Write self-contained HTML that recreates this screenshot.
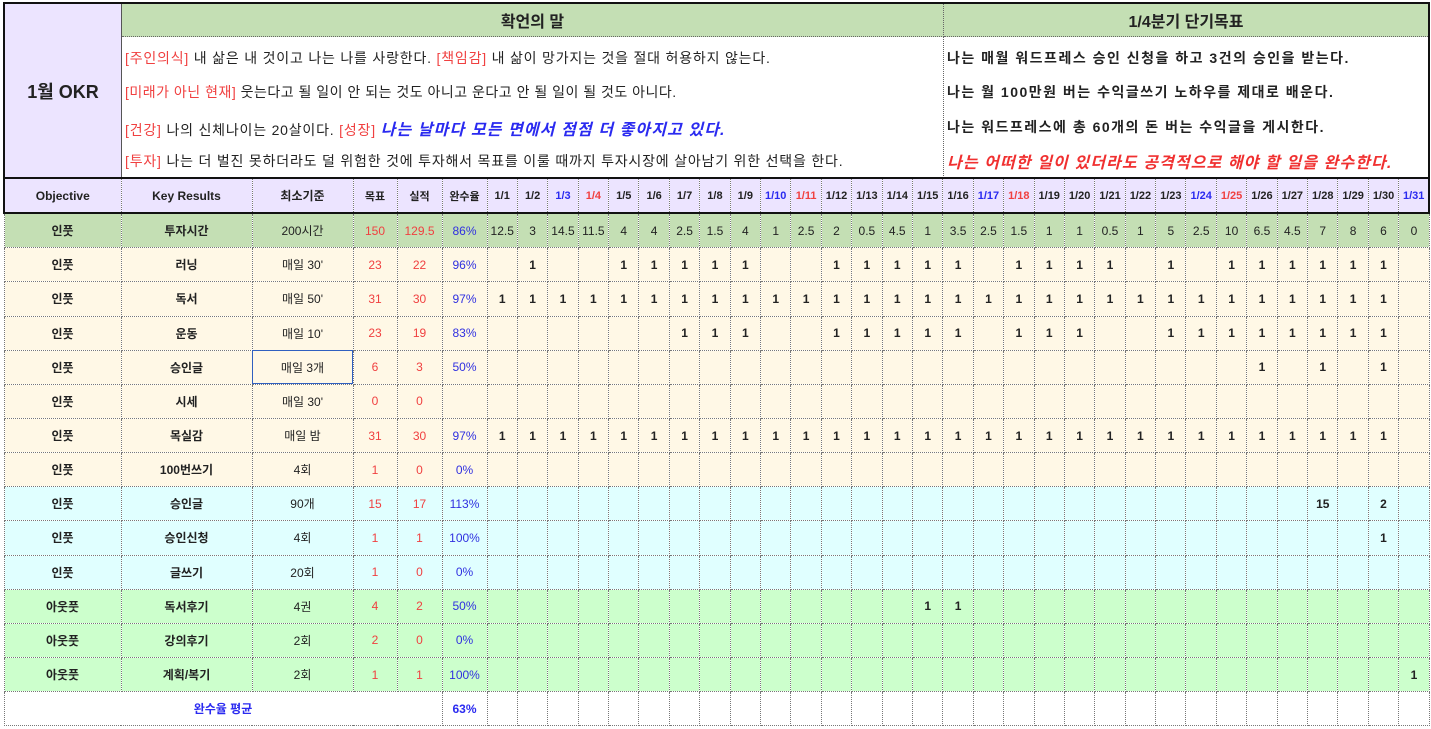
<!DOCTYPE html>
<html><head><meta charset="utf-8"><style>
body{margin:0;width:1431px;height:729px;background:#fff;font-family:"Liberation Sans","Noto Sans CJK KR",sans-serif;color:#222;position:relative;overflow:hidden}
.top{position:absolute;left:3px;top:2px;width:1423px;height:174px;border:2px solid #111;border-bottom:none}
.okr{position:absolute;left:0;top:0;width:116px;height:174px;background:#ece4ff;border-right:1px solid #555;display:flex;align-items:center;justify-content:center;font-weight:bold;font-size:18px}
.h1{position:absolute;top:0;height:32px;background:#c4dfb4;border-bottom:1px dotted #666;font-weight:bold;font-size:16px;display:flex;align-items:center;justify-content:center}
.ln{position:absolute;font-size:14px;letter-spacing:0.8px;white-space:nowrap;color:#222}
.rt{font-weight:bold;letter-spacing:1.5px}
.rd{color:#f04040}.bi{color:#2a2af0;font-style:italic;font-size:16px;font-weight:bold;letter-spacing:1.1px}
.ri{color:#f03030;font-style:italic;font-size:16px;font-weight:bold;letter-spacing:1.1px}
table{position:absolute;left:3px;top:177px;border-collapse:collapse;table-layout:fixed;width:1425px}
td{border:1px dotted #777;height:33.15px;padding:0;text-align:center;font-size:12px;font-weight:bold;color:#222;overflow:hidden;white-space:nowrap}
tr.hd td{background:#ece4ff;font-size:11px;border-top:2px solid #111;border-bottom:2px solid #111}
tr.hd td.k{font-size:12px}
tr.g td{background:#c4dfb4;font-weight:normal}
tr.b td{background:#fff8e6}
tr.c td{background:#e0ffff}
tr.l td{background:#ccffcc}
td.n{font-weight:normal}
td.r{color:#f04040;font-weight:normal}
td.p{color:#3030e0;font-weight:normal}
.bl{color:#2a2af0!important}.re{color:#f04040!important}
tr.a td{background:#fff;color:#2a2af0}
td.sel{outline:1px solid #3060c0;outline-offset:-1px}
</style></head><body>
<div class="top">
<div class="okr">1월 OKR</div>
<div class="h1" style="left:117px;width:821px;border-right:1px dotted #666">확언의 말</div>
<div class="h1" style="left:939px;width:484px">1/4분기 단기목표</div>
<div style="position:absolute;left:938px;top:32px;height:142px;border-left:1px dotted #666"></div>
<div class="ln" style="left:120px;top:44px"><span class="rd">[주인의식]</span> 내 삶은 내 것이고 나는 나를 사랑한다. <span class="rd">[책임감]</span> 내 삶이 망가지는 것을 절대 허용하지 않는다.</div>
<div class="ln" style="left:120px;top:78px;letter-spacing:0.5px"><span class="rd">[미래가 아닌 현재]</span> 웃는다고 될 일이 안 되는 것도 아니고 운다고 안 될 일이 될 것도 아니다.</div>
<div class="ln" style="left:120px;top:112px"><span class="rd">[건강]</span> 나의 신체나이는 20살이다. <span class="rd">[성장]</span> <span class="bi">나는 날마다 모든 면에서 점점 더 좋아지고 있다.</span></div>
<div class="ln" style="left:120px;top:147px"><span class="rd">[투자]</span> 나는 더 벌진 못하더라도 덜 위험한 것에 투자해서 목표를 이룰 때까지 투자시장에 살아남기 위한 선택을 한다.</div>
<div class="ln rt" style="left:942px;top:44px">나는 매월 워드프레스 승인 신청을 하고 3건의 승인을 받는다.</div>
<div class="ln rt" style="left:942px;top:78px">나는 월 100만원 버는 수익글쓰기 노하우를 제대로 배운다.</div>
<div class="ln rt" style="left:942px;top:113px">나는 워드프레스에 총 60개의 돈 버는 수익글을 게시한다.</div>
<div class="ln" style="left:942px;top:145px"><span class="ri">나는 어떠한 일이 있더라도 공격적으로 해야 할 일을 완수한다.</span></div>
</div>
<table>
<colgroup><col style="width:117px"><col style="width:131px"><col style="width:101px"><col style="width:44px"><col style="width:45px"><col style="width:45px">
<col span="31" style="width:30.4px"></colgroup>
<tr class="hd"><td class="k" style="border-left:2px solid #111">Objective<td class="k">Key Results<td class="k">최소기준<td>목표<td>실적<td>완수율<td>1/1<td>1/2<td class="bl">1/3<td class="re">1/4<td>1/5<td>1/6<td>1/7<td>1/8<td>1/9<td class="bl">1/10<td class="re">1/11<td>1/12<td>1/13<td>1/14<td>1/15<td>1/16<td class="bl">1/17<td class="re">1/18<td>1/19<td>1/20<td>1/21<td>1/22<td>1/23<td class="bl">1/24<td class="re">1/25<td>1/26<td>1/27<td>1/28<td>1/29<td>1/30<td class="bl" style="border-right:2px solid #111">1/31</tr>
<tr class="g"><td style="font-weight:bold">인풋<td style="font-weight:bold">투자시간<td>200시간<td class="r">150<td class="r">129.5<td class="p">86%<td>12.5<td>3<td>14.5<td>11.5<td>4<td>4<td>2.5<td>1.5<td>4<td>1<td>2.5<td>2<td>0.5<td>4.5<td>1<td>3.5<td>2.5<td>1.5<td>1<td>1<td>0.5<td>1<td>5<td>2.5<td>10<td>6.5<td>4.5<td>7<td>8<td>6<td>0</tr>
<tr class="b"><td>인풋<td>러닝<td class="n">매일 30'<td class="r">23<td class="r">22<td class="p">96%<td><td>1<td><td><td>1<td>1<td>1<td>1<td>1<td><td><td>1<td>1<td>1<td>1<td>1<td><td>1<td>1<td>1<td>1<td><td>1<td><td>1<td>1<td>1<td>1<td>1<td>1<td></tr>
<tr class="b"><td>인풋<td>독서<td class="n">매일 50'<td class="r">31<td class="r">30<td class="p">97%<td>1<td>1<td>1<td>1<td>1<td>1<td>1<td>1<td>1<td>1<td>1<td>1<td>1<td>1<td>1<td>1<td>1<td>1<td>1<td>1<td>1<td>1<td>1<td>1<td>1<td>1<td>1<td>1<td>1<td>1<td></tr>
<tr class="b"><td>인풋<td>운동<td class="n">매일 10'<td class="r">23<td class="r">19<td class="p">83%<td><td><td><td><td><td><td>1<td>1<td>1<td><td><td>1<td>1<td>1<td>1<td>1<td><td>1<td>1<td>1<td><td><td>1<td>1<td>1<td>1<td>1<td>1<td>1<td>1<td></tr>
<tr class="b"><td>인풋<td>승인글<td class="n sel">매일 3개<td class="r">6<td class="r">3<td class="p">50%<td><td><td><td><td><td><td><td><td><td><td><td><td><td><td><td><td><td><td><td><td><td><td><td><td><td>1<td><td>1<td><td>1<td></tr>
<tr class="b"><td>인풋<td>시세<td class="n">매일 30'<td class="r">0<td class="r">0<td class="p"><td><td><td><td><td><td><td><td><td><td><td><td><td><td><td><td><td><td><td><td><td><td><td><td><td><td><td><td><td><td><td></tr>
<tr class="b"><td>인풋<td>목실감<td class="n">매일 밤<td class="r">31<td class="r">30<td class="p">97%<td>1<td>1<td>1<td>1<td>1<td>1<td>1<td>1<td>1<td>1<td>1<td>1<td>1<td>1<td>1<td>1<td>1<td>1<td>1<td>1<td>1<td>1<td>1<td>1<td>1<td>1<td>1<td>1<td>1<td>1<td></tr>
<tr class="b"><td>인풋<td>100번쓰기<td class="n">4회<td class="r">1<td class="r">0<td class="p">0%<td><td><td><td><td><td><td><td><td><td><td><td><td><td><td><td><td><td><td><td><td><td><td><td><td><td><td><td><td><td><td><td></tr>
<tr class="c"><td>인풋<td>승인글<td class="n">90개<td class="r">15<td class="r">17<td class="p">113%<td><td><td><td><td><td><td><td><td><td><td><td><td><td><td><td><td><td><td><td><td><td><td><td><td><td><td><td>15<td><td>2<td></tr>
<tr class="c"><td>인풋<td>승인신청<td class="n">4회<td class="r">1<td class="r">1<td class="p">100%<td><td><td><td><td><td><td><td><td><td><td><td><td><td><td><td><td><td><td><td><td><td><td><td><td><td><td><td><td><td>1<td></tr>
<tr class="c"><td>인풋<td>글쓰기<td class="n">20회<td class="r">1<td class="r">0<td class="p">0%<td><td><td><td><td><td><td><td><td><td><td><td><td><td><td><td><td><td><td><td><td><td><td><td><td><td><td><td><td><td><td><td></tr>
<tr class="l"><td>아웃풋<td>독서후기<td class="n">4권<td class="r">4<td class="r">2<td class="p">50%<td><td><td><td><td><td><td><td><td><td><td><td><td><td><td>1<td>1<td><td><td><td><td><td><td><td><td><td><td><td><td><td><td><td></tr>
<tr class="l"><td>아웃풋<td>강의후기<td class="n">2회<td class="r">2<td class="r">0<td class="p">0%<td><td><td><td><td><td><td><td><td><td><td><td><td><td><td><td><td><td><td><td><td><td><td><td><td><td><td><td><td><td><td><td></tr>
<tr class="l"><td>아웃풋<td>계획/복기<td class="n">2회<td class="r">1<td class="r">1<td class="p">100%<td><td><td><td><td><td><td><td><td><td><td><td><td><td><td><td><td><td><td><td><td><td><td><td><td><td><td><td><td><td><td>1</tr>
<tr class="a"><td colspan="5">완수율 평균<td>63%<td><td><td><td><td><td><td><td><td><td><td><td><td><td><td><td><td><td><td><td><td><td><td><td><td><td><td><td><td><td><td><td></tr>
</table>
</body></html>
